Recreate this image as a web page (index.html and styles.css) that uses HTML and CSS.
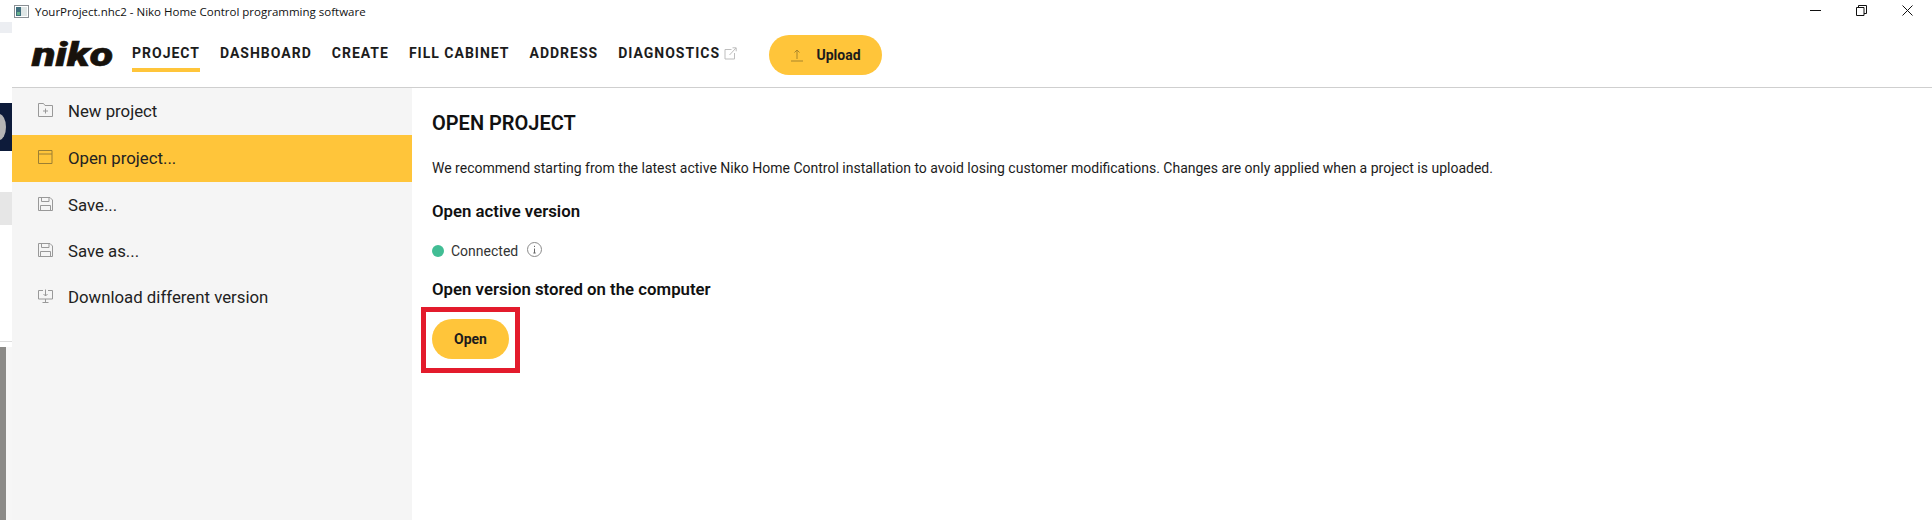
FILE: index.html
```html
<!DOCTYPE html>
<html lang="en">
<head>
<meta charset="utf-8">
<title>YourProject.nhc2 - Niko Home Control programming software</title>
<link rel="stylesheet" href="styles.css">
</head>
<body>
<div class="desktop">
  <div class="strip">
    <div class="s s1"></div>
    <div class="s s2"></div>
    <div class="s s3"><span class="s3dot"></span></div>
    <div class="s s4"></div>
    <div class="s s5"></div>
    <div class="s s6"></div>
    <div class="s s7"></div>
  </div>
  <div class="window">
    <div class="titlebar">
      <svg class="appicon" width="15" height="13" viewBox="0 0 15 13"><rect x=".5" y=".5" width="14" height="12" fill="#fff" stroke="#8a8f94"/><rect x="2" y="2" width="5" height="9" fill="#3f6f7d"/><rect x="7" y="2" width="6" height="9" fill="#dfe6e6"/><rect x="3" y="7" width="3" height="3" fill="#66b08c"/></svg>
      <span class="titletext">YourProject.nhc2 - Niko Home Control programming software</span>
      <div class="winctl">
        <svg width="11" height="11" viewBox="0 0 11 11"><path d="M0 5.500h11" stroke="#111" fill="none"/></svg>
        <svg width="11" height="11" viewBox="0 0 11 11"><path d="M.5 2.500h7.500v8h-7.500zM2.500 2.500v-2h8v8h-2.500" stroke="#111" fill="none"/></svg>
        <svg width="11" height="11" viewBox="0 0 11 11"><path d="M.5.5l10 10M10.500.5l-10 10" stroke="#111" fill="none"/></svg>
      </div>
    </div>
    <header class="nav">
      <span class="logo">niko</span>
      <nav class="tabs">
        <a class="tab active">PROJECT</a>
        <a class="tab">DASHBOARD</a>
        <a class="tab">CREATE</a>
        <a class="tab">FILL CABINET</a>
        <a class="tab">ADDRESS</a>
        <a class="tab">DIAGNOSTICS
          <svg class="exticon" width="13" height="13" viewBox="0 0 13 13"><path d="M7.500 2.500h-6.500v9.500h9.500v-6M5.500 8l6.500-7M8.500 .8h3.700v3.500" fill="none" stroke="#bdbdbd"/></svg>
        </a>
      </nav>
      <button class="btn upload">
        <svg width="14" height="14" viewBox="0 0 14 14"><path d="M7 11V2M4.500 4.500L7 2l2.500 2.500M1 13h12" fill="none" stroke="#a9852a"/></svg>
        Upload
      </button>
    </header>
    <div class="body">
      <aside class="side">
        <div class="item">
          <svg class="ico" viewBox="0 0 15 14"><path d="M.5 13.500V.5h5l1.500 2h7.500v11zM7.500 5.500v5M5 8h5" fill="none" stroke="#999"/></svg>
          New project
        </div>
        <div class="item on">
          <svg class="ico" viewBox="0 0 15 14"><path d="M.5 13.500V.5h13.500v13zM.5 4h13.500" fill="none" stroke="#9c7f32"/></svg>
          Open project...
        </div>
        <div class="item low">
          <svg class="ico" viewBox="0 0 15 14"><path d="M.5 13.500V.5h11.500l2.500 2.500v10.500zM3.500.5v4h7.500v-4M2.500 13.500v-5h10v5" fill="none" stroke="#999"/></svg>
          Save...
        </div>
        <div class="item low">
          <svg class="ico" viewBox="0 0 15 14"><path d="M.5 13.500V.5h11.500l2.500 2.500v10.500zM3.500.5v4h7.500v-4M2.500 13.500v-5h10v5" fill="none" stroke="#999"/></svg>
          Save as...
        </div>
        <div class="item low">
          <svg class="ico" viewBox="0 0 15 14"><path d="M5 1.500H.5v8.500h14V1.500H10M7.500 .5v6.500M5.500 5l2 2 2-2M7.500 10v3M4.500 13.500h6" fill="none" stroke="#999"/></svg>
          Download different version
        </div>
      </aside>
      <main class="main">
        <h1 class="title">OPEN PROJECT</h1>
        <p class="intro">We recommend starting from the latest active Niko Home Control installation to avoid losing customer modifications. Changes are only applied when a project is uploaded.</p>
        <h2 class="sub">Open active version</h2>
        <div class="status">
          <span class="dot"></span>
          <span>Connected</span>
          <svg width="15" height="15" viewBox="0 0 15 15"><circle cx="7.500" cy="7.500" r="7" fill="none" stroke="#8a8a8a"/><path d="M7.500 6.500v4.500M6.300 11h2.400M7.500 3.800v1.200" fill="none" stroke="#666"/></svg>
        </div>
        <h2 class="sub sub2">Open version stored on the computer</h2>
        <div class="callout"><button class="btn open">Open</button></div>
      </main>
    </div>
  </div>
</div>
</body>
</html>
```
FILE: styles.css
```css
* { box-sizing: border-box; }
html, body { margin: 0; height: 100%; }
body { overflow: hidden; background: #fff; font-family: Roboto, sans-serif; color: #1c1c1c; }
.desktop { display: flex; height: 520px; }
.strip { width: 12px; flex: none; display: flex; flex-direction: column; }
.s { flex: none; }
.s1 { height: 33px; background: #eceef2; }
.s2 { height: 70px; background: #fff; }
.s3 { height: 48px; background: #0d1b3a; overflow: hidden; display: flex; align-items: center; }
.s3dot { width: 14px; height: 26px; margin-left: -8px; border-radius: 50%; background: #b5b5b5; }
.s4 { height: 41px; background: #fff; }
.s5 { height: 33px; background: #e6e6e6; }
.s6 { height: 117px; background: #fff; border-bottom: 1px solid #ddd; }
.s7 { flex: 1; margin-top: 5px; background: linear-gradient(90deg, #8b8a87 0 6px, #f6f6f6 6px); }
.window { flex: 1; min-width: 0; display: flex; flex-direction: column; }
.titlebar { height: 22px; flex: none; display: flex; align-items: center; margin-left: -12px; padding-left: 14px; font: 11.5px "Open Sans", "Liberation Sans", sans-serif; color: #111; position: relative; background: #fff; }
.appicon { margin-right: 6px; }
.winctl { margin-left: auto; display: flex; gap: 35px; padding-right: 19px; margin-top: -2px; }
.nav { height: 66px; flex: none; border-bottom: 1px solid #cfcfcf; display: flex; align-items: center; padding-left: 20px; }
.logo { font: italic 900 33px/1 Roboto, sans-serif; color: #17120c; width: 80px; margin-right: 20px; transform: scaleX(1.3); transform-origin: left; -webkit-text-stroke: .6px #17120c; }
.tabs { display: flex; gap: 20px; align-self: stretch; }
.tab { font-size: 14px; font-weight: 700; letter-spacing: 1px; color: #1c1c1c; display: flex; align-items: center; gap: 4px; height: 50px; border-bottom: 4px solid transparent; padding-top: 16px; }
.tab.active { border-bottom-color: #ffc53a; }
.btn { border: 0; background: #ffc53a; border-radius: 20px; height: 40px; font: 700 14px Roboto, sans-serif; color: #1c1c1c; display: inline-flex; align-items: center; justify-content: center; }
.upload { width: 113px; margin-left: 32px; gap: 12px; }
.body { flex: 1; display: flex; min-height: 0; }
.side { width: 400px; flex: none; background: #f5f5f5; }
.item { height: 47px; display: flex; align-items: center; gap: 15px; padding-left: 26px; padding-bottom: 1px; font-size: 16.8px; color: #222; }
.item.low { height: 46px; padding-bottom: 0; }
.ico { flex: none; width: 15px; height: 14px; margin-top: -2px; }
.item.on { background: #ffc53a; }
.main { flex: 1; padding: 23px 20px; }
.title { margin: 0; font-size: 20px; font-weight: 600; line-height: 24px; color: #111; }
.intro { margin: 23px 0 0; font-size: 14px; line-height: 20px; }
.sub { margin: 22px 0 0; font-size: 16.8px; font-weight: 600; line-height: 22px; color: #111; }
.status { display: flex; align-items: center; margin-top: 19px; font-size: 14px; height: 20px; color: #333; }
.dot { width: 12px; height: 12px; border-radius: 50%; background: #41bd94; margin-right: 7px; }
.status svg { margin-left: 9px; margin-top: -3px; }
.sub2 { margin-top: 17px; }
.callout { margin-top: 7px; width: 99px; height: 66px; margin-left: -11px; border: 5px solid #e31b2c; padding-bottom: 2px; display: flex; align-items: center; justify-content: center; }
.open { width: 77px; }
```
